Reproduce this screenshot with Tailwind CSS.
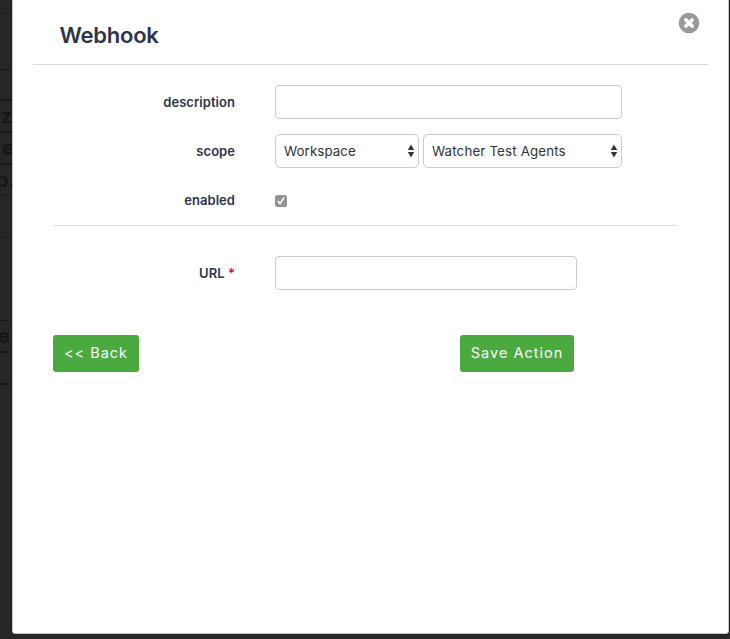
<!DOCTYPE html>
<html lang="en">
<head>
<meta charset="utf-8">
<title>Webhook</title>
<script src="https://cdn.jsdelivr.net/npm/@tailwindcss/browser@4"></script>
</head>
<body class="relative h-[639px] w-[730px] overflow-hidden bg-[#262626] font-['Inter',sans-serif] text-[#2e3547]">
<!-- Dimmed page behind the dialog -->
<div class="h-[639px] w-3 overflow-hidden whitespace-nowrap text-[20px] leading-[30px] font-semibold text-[#151515]">
  <div class="h-[9px] border-b border-[#202020]"></div>
  <div class="h-[61px] border-b border-[#191919]"></div>
  <div class="h-[31px] border-b-2 border-[#191919]"></div>
  <div class="h-8 border-b-2 border-[#191919] pl-px">z</div>
  <div class="h-8 border-b-2 border-[#191919] pl-0.5">e</div>
  <div class="h-[31px] border-b border-[#191919]"><span class="-ml-1">p.</span></div>
  <div class="h-[37px] border-b border-[#202020]"></div>
  <div class="h-[44px] border-b border-[#242424]"></div>
  <div class="h-[44px] border-b border-[#191919]"></div>
  <div class="h-8 border-b-2 border-[#191919]"><span class="-ml-0.5">e</span></div>
  <div class="h-8 border-b-2 border-[#191919]"></div>
</div>
<!-- Dialog -->
<main class="absolute -top-px left-3 h-[635px] w-[717px] rounded-b-[3px] border border-[#c4c6c6] bg-white px-5">
  <header class="flex h-[65px] items-start justify-between border-b border-[#d9d9d9] pr-2 pl-[26.5px]">
    <h1 class="mt-[21px] text-[22px] leading-[28px] font-semibold tracking-[-0.25px]">Webhook</h1>
    <button class="mt-3 block size-[22px]" aria-label="Close">
      <svg class="block size-[22px]" viewBox="0 0 22 22"><circle cx="11" cy="11" r="10.3" fill="#999"/><path d="M7.9 7.9l6.2 6.2M14.1 7.9l-6.2 6.2" stroke="#fff" stroke-width="3.6" stroke-linecap="round"/></svg>
    </button>
  </header>
  <form class="px-5 pt-5 text-[13px]">
    <div class="flex h-[34px] items-center">
      <label class="w-[182px] pt-0.5 text-right font-semibold tracking-[0.05px]">description</label>
      <input class="ml-10 h-[34px] w-[347px] rounded-[4px] border border-[#ccc]">
    </div>
    <div class="mt-[15px] flex h-[34px] items-center">
      <label class="w-[182px] pt-0.5 text-right font-semibold tracking-[0.05px]">scope</label>
      <div class="ml-10 flex h-[34px] w-36 items-center justify-between rounded-[5px] border border-[#ccc] pr-[3px] pl-2 text-[13.33px] tracking-[0.08px] text-[#333]">
        <span class="pt-0.5">Workspace</span>
        <svg class="h-3.5 w-2" viewBox="0 0 8 14"><path d="M4 .5L7.2 6H.8zM4 13.5L.8 8h6.4z" fill="#333"/></svg>
      </div>
      <div class="ml-1 flex h-[34px] w-[199px] items-center justify-between rounded-[5px] border border-[#ccc] pr-[3px] pl-2 text-[13.33px] tracking-[0.15px] text-[#333]">
        <span class="pt-0.5">Watcher Test Agents</span>
        <svg class="h-3.5 w-2" viewBox="0 0 8 14"><path d="M4 .5L7.2 6H.8zM4 13.5L.8 8h6.4z" fill="#333"/></svg>
      </div>
    </div>
    <div class="mt-[15px] flex h-[34px] items-center">
      <label class="w-[182px] pt-0.5 text-right font-semibold tracking-[0.05px]">enabled</label>
      <svg class="mt-px ml-10 size-3" viewBox="0 0 12 12"><rect width="12" height="12" rx="2.5" fill="#929297"/><path d="M3.2 6.4l1.9 2.3L8.8 3" fill="none" stroke="#fff" stroke-width="1.5" stroke-linecap="round" stroke-linejoin="round"/></svg>
    </div>
    <hr class="mt-2 w-[625px] border-[#e0e0e0]">
    <div class="mt-[30px] flex h-[34px] items-center">
      <label class="w-[182px] pt-0.5 text-right font-semibold tracking-[0.05px]">URL <span class="text-[#f5001d]">*</span></label>
      <input class="ml-10 h-[34px] w-[302px] rounded-[4px] border border-[#ccc]">
    </div>
    <div class="mt-[45px] flex w-[521px] justify-between text-[14.5px] tracking-[1px] text-white">
      <button type="button" class="h-[37px] w-[86px] rounded-[3px] bg-[#4aaa3f] pb-0.5">&lt;&lt; Back</button>
      <button type="button" class="h-[37px] w-[114px] rounded-[3px] bg-[#4aaa3f] pb-0.5">Save Action</button>
    </div>
  </form>
</main>
</body>
</html>
